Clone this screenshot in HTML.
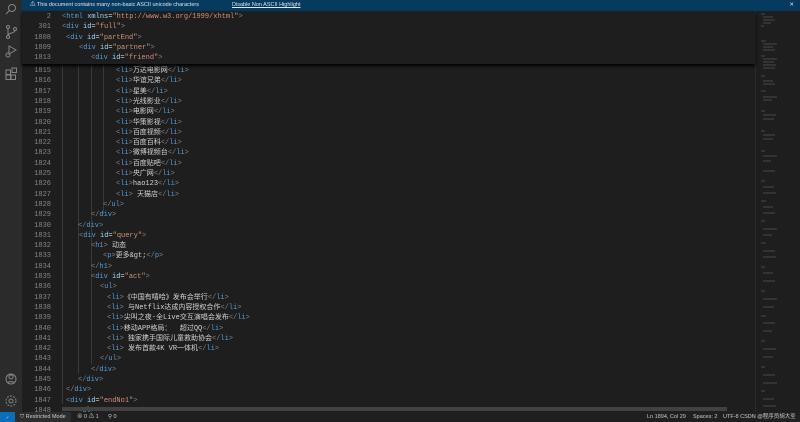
<!DOCTYPE html>
<html><head><meta charset="utf-8"><style>
*{margin:0;padding:0;box-sizing:border-box}
body{width:800px;height:422px;background:#1e1e1e;overflow:hidden;position:relative;font-family:"Liberation Sans","Noto Sans CJK SC",sans-serif}
#act{position:absolute;left:0;top:0;width:22px;height:412px;background:#2b2b2b}
#banner{position:absolute;left:22px;top:0;width:778px;height:11px;background:#063b5f;color:#dfe6ee;font-size:5.5px;line-height:11px;padding-left:8px}
#banner u{position:absolute;left:210px}
.ln{position:absolute;left:22px;width:29px;text-align:right;color:#858585;font:7px "Liberation Mono",monospace;line-height:10.3px}
.cd{position:absolute;white-space:pre;font:7px "Liberation Mono","Noto Sans CJK SC",monospace;line-height:10.3px;color:#d4d4d4}
.g{color:#808080}.t{color:#569cd6}.a{color:#9cdcfe}.s{color:#ce9178}
#hdr{position:absolute;left:22px;top:11px;width:733px;height:53px;background:#1e1e1e;box-shadow:0 2px 3px #000;z-index:2}
.guide{position:absolute;width:1px;background:#3a3a3a;top:64px}
#mini{position:absolute;left:755px;top:11px;width:45px;height:401px;background:#1e1e1e;border-left:1px solid #2a2a2a}
#sb{position:absolute;left:0;top:412px;width:800px;height:10px;background:#1f1f1f;color:#ccc;font-size:5.5px;line-height:10px}
</style></head><body>
<div id="act">
<svg width="22" height="412" fill="none" stroke="#858585" stroke-width="1">
<circle cx="12" cy="8" r="3.5"/><path d="M9.5 10.5 6 14"/>
<circle cx="8" cy="27" r="1.5"/><circle cx="8" cy="37" r="1.5"/><circle cx="15" cy="29" r="1.5"/><path d="M8 28.5v7M15 30.5c0 3-7 2-7 5"/>
<path d="M9 46l7 4-7 4z"/><circle cx="8" cy="55" r="2"/>
<rect x="6" y="70" width="4.5" height="4.5"/><rect x="6" y="75" width="4.5" height="4.5"/><rect x="11" y="75" width="4.5" height="4.5"/><rect x="12" y="68" width="4.5" height="4.5"/>
<circle cx="11" cy="379" r="5"/><circle cx="11" cy="377" r="2"/><path d="M7.5 383c2-2 5-2 7 0"/>
<circle cx="11" cy="401" r="2"/><circle cx="11" cy="401" r="5" stroke-dasharray="2 1.2"/>
</svg></div>
<div id="banner">⚠ This document contains many non-basic ASCII unicode characters<u>Disable Non ASCII Highlight</u><span style="position:absolute;right:6px">✕</span></div>
<div id="hdr">
<div class="ln" style="left:0;top:1px">2</div><div class="cd" style="left:40px;top:1px"><span class="g">&lt;</span><span class="t">html</span> <span class="a">xmlns</span>=<span class="s">"http://www.w3.org/1999/xhtml"</span><span class="g">&gt;</span></div>
<div class="ln" style="left:0;top:11.3px">301</div><div class="cd" style="left:40px;top:11.3px"><span class="g">&lt;</span><span class="t">div</span> <span class="a">id</span>=<span class="s">"full"</span><span class="g">&gt;</span></div>
<div class="ln" style="left:0;top:21.6px">1808</div><div class="cd" style="left:44px;top:21.6px"><span class="g">&lt;</span><span class="t">div</span> <span class="a">id</span>=<span class="s">"partEnd"</span><span class="g">&gt;</span></div>
<div class="ln" style="left:0;top:31.9px">1809</div><div class="cd" style="left:57px;top:31.9px"><span class="g">&lt;</span><span class="t">div</span> <span class="a">id</span>=<span class="s">"partner"</span><span class="g">&gt;</span></div>
<div class="ln" style="left:0;top:42.2px">1813</div><div class="cd" style="left:69px;top:42.2px"><span class="g">&lt;</span><span class="t">div</span> <span class="a">id</span>=<span class="s">"friend"</span><span class="g">&gt;</span></div>
</div>
<div class="guide" style="left:62px;height:340px"></div>
<div class="guide" style="left:78px;height:310px"></div>
<div class="guide" style="left:91px;height:300px"></div>
<div class="guide" style="left:103px;height:150px"></div>
<div id="lines"></div>
<script>
const L=[
[1815,116,'li','万达电影网'],[1816,116,'li','华谊兄弟'],[1817,116,'li','星美'],[1818,116,'li','光线影业'],[1819,116,'li','电影网'],[1820,116,'li','华策影视'],[1821,116,'li','百度视频'],[1822,116,'li','百度百科'],[1823,116,'li','微博视频台'],[1824,116,'li','百度贴吧'],[1825,116,'li','央广网'],[1826,116,'li','hao123'],[1827,116,'li',' 天猫店'],
[1828,103,'c','ul'],[1829,91,'c','div'],[1830,78,'c','div'],[1831,79,'o','query'],[1832,91,'h',''],[1833,103,'p',''],[1834,91,'c','h1'],[1835,91,'o','act'],[1836,100,'u',''],
[1837,107,'li','《中国有嘻哈》发布会举行'],[1838,107,'li',' 与Netflix达成内容授权合作'],[1839,107,'li','尖叫之夜-全Live交互演唱会发布'],[1840,107,'li','移动APP格局：  超过QQ'],[1841,107,'li',' 独家携手国际儿童救助协会'],[1842,107,'li',' 发布首款4K VR一体机'],
[1843,100,'c','ul'],[1844,91,'c','div'],[1845,78,'c','div'],[1846,66,'c','div'],[1847,66,'o','endNo1'],[1848,78,'u','']];
const tg=(n,c)=>`<span class="g">&lt;${c?'/':''}</span><span class="t">${n}</span><span class="g">&gt;</span>`;
let h='';L.forEach((r,i)=>{const y=66+i*10.3;let c;
if(r[2]=='li')c=tg('li')+r[3]+tg('li',1);
else if(r[2]=='c')c=tg(r[3],1);
else if(r[2]=='o')c=`<span class="g">&lt;</span><span class="t">div</span> <span class="a">id</span>=<span class="s">"${r[3]}"</span><span class="g">&gt;</span>`;
else if(r[2]=='h')c=tg('h1')+' 动态';
else if(r[2]=='p')c=tg('p')+'更多&amp;gt;'+tg('p',1);
else c=tg('ul');
h+=`<div class="ln" style="top:${y}px">${r[0]}</div><div class="cd" style="left:${r[1]}px;top:${y}px">${c}</div>`;});
document.getElementById('lines').innerHTML=h;
</script>
<div style="position:absolute;left:62px;top:407px;width:665px;height:4px;background:#424242"></div>
<div id="mini"><svg width="45" height="401">
<g stroke="#5a6a7a" stroke-width="0.8" opacity="0.8">
<path d="M5 3h4M7 6h10M7 9h12M7 12h8M5 15h3M5 30h5M7 33h14M7 36h10M7 39h12M5 45h4M7 48h14M7 51h11M7 54h13M7 57h12M5 65h4M7 70h10M7 73h12M5 80h5M7 86h14M7 89h9M5 100h4M7 104h13M7 108h11M5 120h4M7 124h12M7 128h10M5 140h4M7 145h14M7 150h8M7 160h12M5 170h4M7 176h11M7 182h13M5 190h5M7 196h10M7 202h12M5 210h4M7 218h14M7 224h9M5 232h5M7 240h12M7 246h13M5 256h4M7 262h10M7 270h12M5 280h4M7 288h14M7 296h11M5 305h5M7 312h12M7 320h9M5 330h4M7 338h13M7 346h10M5 356h4M7 364h12M7 372h14M5 380h4M7 388h11M7 395h13"/>
</g></svg></div>
<div id="sb">
<div style="position:absolute;left:0;width:15px;height:10px;background:#0a6fb8;color:#fff;text-align:center">⸝</div>
<div style="position:absolute;left:15px;width:56px;height:10px;background:#2d2d2d;padding-left:5px">⛉ Restricted Mode</div>
<div style="position:absolute;left:77px">⊗ 0 ⚠ 1</div>
<div style="position:absolute;left:108px">⚲ 0</div>
<div style="position:absolute;left:647px">Ln 1894, Col 29</div>
<div style="position:absolute;left:693px">Spaces: 2</div>
<div style="position:absolute;left:723px">UTF-8 CSDN @程序员胡大圣</div>
</div>
</body></html>
